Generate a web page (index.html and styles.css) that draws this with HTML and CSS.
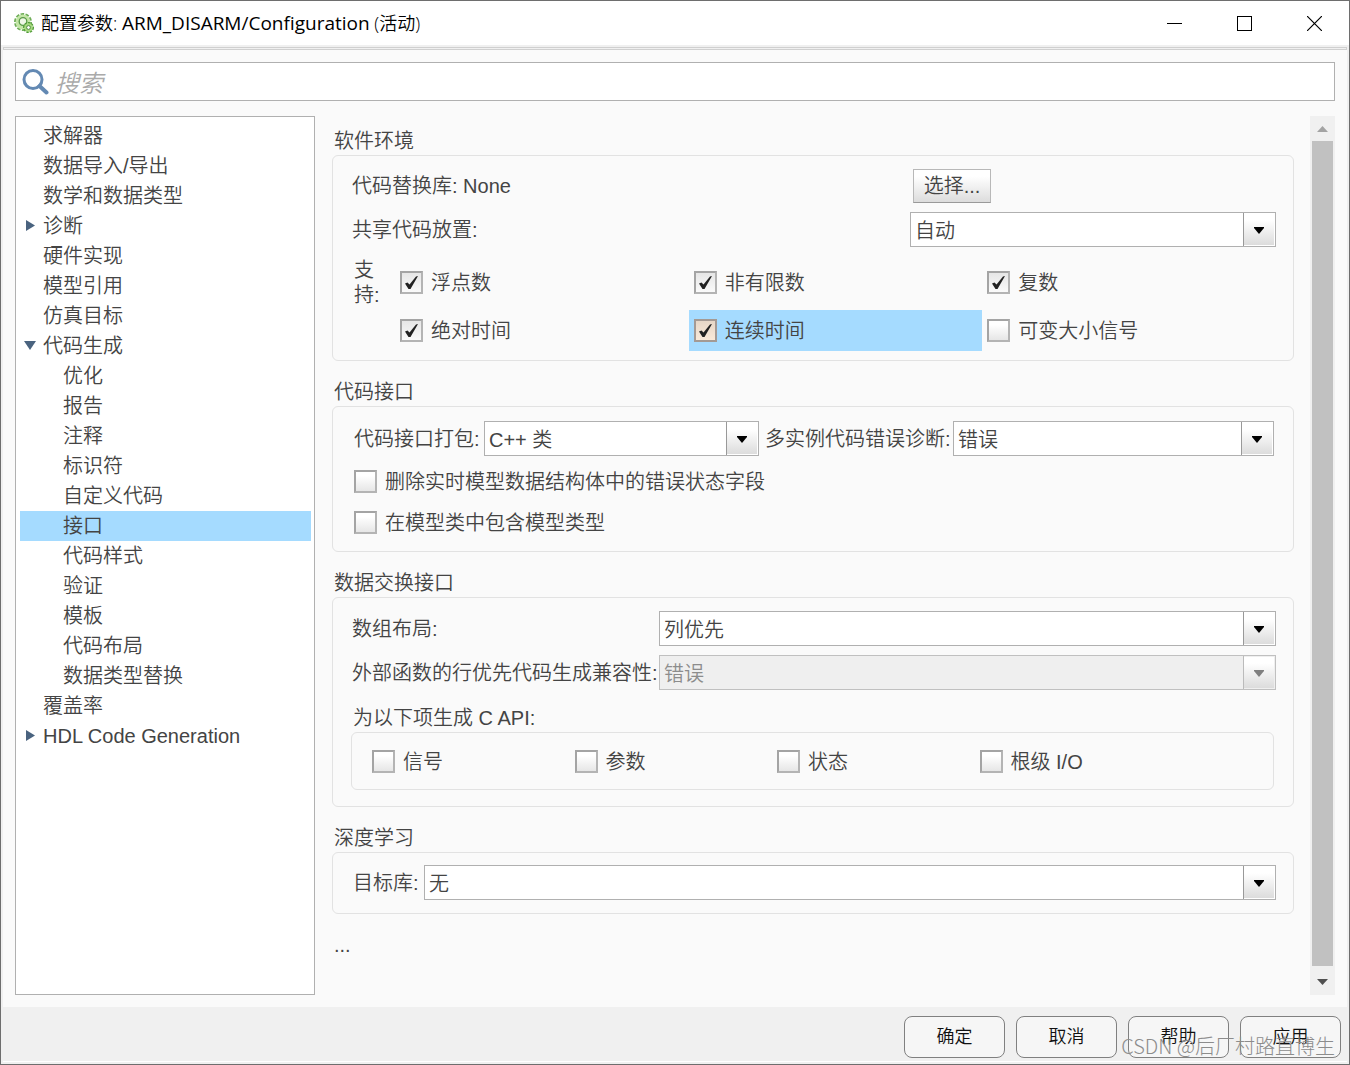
FILE: index.html
```html
<!DOCTYPE html>
<html lang="zh-CN">
<head>
<meta charset="utf-8">
<title>配置参数: ARM_DISARM/Configuration (活动)</title>
<link rel="stylesheet" href="styles.css">
</head>
<body>
<div class="window">
  <header class="titlebar">
    <svg class="app-icon" viewBox="0 0 20 20" aria-hidden="true">
      <circle cx="9" cy="9" r="8" fill="none" stroke="#6fae58" stroke-width="2" stroke-dasharray="3.600 1.400"/>
      <circle cx="9" cy="9" r="7.400" fill="#c3e6a6"/>
      <circle cx="9" cy="8.500" r="3.800" fill="#eef7e6" stroke="#5a9a48" stroke-width="1.300"/>
      <circle cx="14.500" cy="14.500" r="4.600" fill="none" stroke="#4f9a38" stroke-width="1.800" stroke-dasharray="2.400 1"/>
      <circle cx="14.500" cy="14.500" r="4.200" fill="#a5d97c"/>
      <circle cx="14.500" cy="14.500" r="1.900" fill="#fff" stroke="#4f8a40"/>
    </svg>
    <h1 class="title">配置参数: <span class="model">ARM_DISARM/Configuration</span> (活动)</h1>
    <div class="window-controls">
      <button type="button" class="window-button" aria-label="最小化"><svg width="15" height="15" viewBox="0 0 15 15"><path d="M0 7.500H15" stroke="#000"/></svg></button>
      <button type="button" class="window-button" aria-label="最大化"><svg width="15" height="15" viewBox="0 0 15 15"><rect x=".5" y=".5" width="14" height="14" fill="none" stroke="#000"/></svg></button>
      <button type="button" class="window-button" aria-label="关闭"><svg width="15" height="15" viewBox="0 0 15 15"><path d="M0 0L15 15M15 0L0 15" stroke="#000" stroke-width="1.200"/></svg></button>
    </div>
  </header>

  <div class="rule"></div>

  <main class="content">
    <label class="search">
      <svg width="27" height="27" viewBox="0 0 27 27" aria-hidden="true"><circle cx="11" cy="11.500" r="9" fill="none" stroke="#6389b3" stroke-width="3"/><path d="M17.500 18L24.500 24.500" stroke="#6389b3" stroke-width="4" stroke-linecap="round"/></svg>
      <input type="search" class="search-input" placeholder="搜索" aria-label="搜索">
    </label>

    <div class="columns">
      <nav class="tree" aria-label="类别">
        <ul class="tree-list">
          <li><a class="node" href="#">求解器</a></li>
          <li><a class="node" href="#">数据导入/导出</a></li>
          <li><a class="node" href="#">数学和数据类型</a></li>
          <li><a class="node branch" href="#"><svg width="14" height="14" viewBox="0 0 14 14"><path d="M2 1V12L11 6.500Z" fill="#4a637f"/></svg>诊断</a></li>
          <li><a class="node" href="#">硬件实现</a></li>
          <li><a class="node" href="#">模型引用</a></li>
          <li><a class="node" href="#">仿真目标</a></li>
          <li><a class="node branch" href="#"><svg width="14" height="14" viewBox="0 0 14 14"><path d="M0 2H12L6 11Z" fill="#4a637f"/></svg>代码生成</a>
            <ul class="tree-list nested">
              <li><a class="node" href="#">优化</a></li>
              <li><a class="node" href="#">报告</a></li>
              <li><a class="node" href="#">注释</a></li>
              <li><a class="node" href="#">标识符</a></li>
              <li><a class="node" href="#">自定义代码</a></li>
              <li><a class="node selected" href="#" aria-current="page">接口</a></li>
              <li><a class="node" href="#">代码样式</a></li>
              <li><a class="node" href="#">验证</a></li>
              <li><a class="node" href="#">模板</a></li>
              <li><a class="node" href="#">代码布局</a></li>
              <li><a class="node" href="#">数据类型替换</a></li>
            </ul>
          </li>
          <li><a class="node" href="#">覆盖率</a></li>
          <li><a class="node branch" href="#"><svg width="14" height="14" viewBox="0 0 14 14"><path d="M2 1V12L11 6.500Z" fill="#4a637f"/></svg>HDL Code Generation</a></li>
        </ul>
      </nav>

      <form class="settings">
        <section>
          <h2 class="group-title">软件环境</h2>
          <div class="group environment">
            <div class="split">
              <span>代码替换库: None</span>
              <button type="button" class="choose">选择...</button>
            </div>
            <div class="split">
              <label for="placement">共享代码放置:</label>
              <select id="placement" class="select"><option>自动</option></select>
            </div>
            <div class="support" role="group" aria-labelledby="support-label">
              <span id="support-label" class="support-label">支持:</span>
              <div class="support-grid">
                <label class="check"><input type="checkbox" checked>浮点数</label>
                <label class="check"><input type="checkbox" checked>非有限数</label>
                <label class="check"><input type="checkbox" checked>复数</label>
                <label class="check"><input type="checkbox" checked>绝对时间</label>
                <label class="check highlight"><input type="checkbox" checked>连续时间</label>
                <label class="check"><input type="checkbox">可变大小信号</label>
              </div>
            </div>
          </div>
        </section>

        <section>
          <h2 class="group-title">代码接口</h2>
          <div class="group code-interface">
            <div class="packaging">
              <label for="packaging">代码接口打包:</label>
              <select id="packaging" class="select"><option>C++ 类</option></select>
              <label for="multi">多实例代码错误诊断:</label>
              <select id="multi" class="select"><option>错误</option></select>
            </div>
            <label class="check"><input type="checkbox">删除实时模型数据结构体中的错误状态字段</label>
            <label class="check"><input type="checkbox">在模型类中包含模型类型</label>
          </div>
        </section>

        <section>
          <h2 class="group-title">数据交换接口</h2>
          <div class="group exchange">
            <div class="field">
              <label for="layout">数组布局:</label>
              <select id="layout" class="select"><option>列优先</option></select>
            </div>
            <div class="field">
              <label for="compat">外部函数的行优先代码生成兼容性:</label>
              <select id="compat" class="select" disabled><option>错误</option></select>
            </div>
            <div class="api" role="group" aria-labelledby="api-title">
              <h3 id="api-title" class="group-title">为以下项生成 C API:</h3>
              <div class="group api-group">
                <label class="check"><input type="checkbox">信号</label>
                <label class="check"><input type="checkbox">参数</label>
                <label class="check"><input type="checkbox">状态</label>
                <label class="check"><input type="checkbox">根级 I/O</label>
              </div>
            </div>
          </div>
        </section>

        <section>
          <h2 class="group-title">深度学习</h2>
          <div class="group learning">
            <label for="library">目标库:</label>
            <select id="library" class="select"><option>无</option></select>
          </div>
        </section>

        <a class="more" href="#">...</a>
      </form>

      <div class="scrollbar" aria-hidden="true">
        <svg width="25" height="25" viewBox="0 0 25 25"><path d="M7 16H18L12.500 10Z" fill="#a3a3a3"/></svg>
        <div class="thumb"></div>
        <svg width="25" height="29" viewBox="0 0 25 29"><path d="M7 13H18L12.500 19Z" fill="#505050"/></svg>
      </div>
    </div>
  </main>

  <footer class="footer">
    <button type="button" class="action">确定</button>
    <button type="button" class="action">取消</button>
    <button type="button" class="action">帮助</button>
    <button type="button" class="action">应用</button>
    <span class="watermark">CSDN @后厂村路直博生</span>
  </footer>
</div>
</body>
</html>
```

FILE: styles.css
```css
* {
  box-sizing: border-box;
}

body {
  margin: 0;
  color: #444;
  font: 350 20px/32px "Liberation Sans", "Noto Sans CJK SC", sans-serif;
}

h1, h2, h3, ul {
  margin: 0;
  padding: 0;
  font: inherit;
}

button, input, select {
  margin: 0;
  color: inherit;
  font: inherit;
}

.window {
  display: flex;
  flex-direction: column;
  min-height: 100vh;
  border: 1px solid #6e6e6e;
  background: #f0f0f0;
}

/* Title bar */
.titlebar {
  display: flex;
  align-items: center;
  height: 44px;
  padding-left: 13px;
  background: #fff;
}

.app-icon {
  width: 20px;
  height: 20px;
  margin-right: 7px;
}

.title {
  flex: 1;
  color: #000;
  font: 350 18px/30px "Open Sans", "Noto Sans CJK SC", sans-serif;
}

.model {
  font-size: 19px;
  font-weight: 400;
}

.window-controls {
  display: flex;
}

.window-button {
  display: flex;
  align-items: center;
  justify-content: center;
  width: 70px;
  height: 43px;
  padding: 0;
  border: 0;
  background: none;
}

.rule {
  height: 3px;
  margin: 2px 2px 0;
  border: 1px solid #d0d0d0;
}

/* Main area */
.content {
  flex: 1;
  display: flex;
  flex-direction: column;
  gap: 15px;
  margin: 0 2px;
  padding: 12px;
  background: #fafafa;
}

.search {
  display: flex;
  align-items: center;
  gap: 6px;
  height: 39px;
  padding-left: 6px;
  border: 1px solid #b0b0b0;
  background: #fff;
}

.search-input {
  flex: 1;
  height: 37px;
  padding: 4px 0 0;
  border: 0;
  outline: 0;
  background: none;
  font-size: 24px;
}

.search-input::placeholder {
  color: #aaa;
  font-style: italic;
}

.columns {
  flex: 1;
  display: flex;
}

.tree {
  width: 300px;
  padding: 4px 3px 4px 4px;
  border: 1px solid #b0b0b0;
  background: #fff;
}

.tree-list {
  list-style: none;
}

.node {
  display: flex;
  align-items: center;
  height: 30px;
  padding-left: 23px;
  color: inherit;
  text-decoration: none;
}

.branch {
  padding-left: 4px;
}

.branch svg {
  margin-right: 5px;
}

.nested .node {
  padding-left: 43px;
}

.selected {
  background: #a5dbff;
}

/* Settings form */
.settings {
  flex: 1;
  padding: 9px 16px 0 17px;
}

.group-title {
  height: 30px;
  padding-left: 2px;
}

.group {
  margin-bottom: 15px;
  border: 1px solid #e2e2e2;
  border-radius: 6px;
}

.environment {
  padding: 13px 17px 9px 19px;
}

.split {
  display: grid;
  grid-template-columns: 558fr 366fr;
  align-items: center;
  margin-bottom: 9px;
}

.choose {
  justify-self: start;
  width: 78px;
  height: 34px;
  margin-left: 3px;
  padding: 0;
  border: 1px solid #b8b8b8;
  border-bottom-color: #999;
  background: linear-gradient(#fff 20%, #dcdcdc);
}

.select {
  min-width: 0;
  width: 100%;
  height: 35px;
  padding: 2px 36px 0 4px;
  border: 1px solid #b0b0b0;
  border-radius: 0;
  appearance: none;
  background:
    url("data:image/svg+xml,%3Csvg xmlns='http://www.w3.org/2000/svg' width='10' height='7'%3E%3Cpath d='M0 0H10V1L5 7L0 1Z'/%3E%3C/svg%3E") right 11px top 14px / 10px 7px no-repeat,
    linear-gradient(#fff 20%, #dcdcdc) right 1px top 1px / 30px 31px no-repeat,
    linear-gradient(#999, #999) right 31px top 0 / 1px 33px no-repeat,
    #fff;
}

.select:disabled {
  border-color: #c0c0c0;
  color: #8c8c8c;
  opacity: 1;
  background:
    url("data:image/svg+xml,%3Csvg xmlns='http://www.w3.org/2000/svg' width='10' height='7'%3E%3Cpath fill='%23808080' d='M0 0H10V1L5 7L0 1Z'/%3E%3C/svg%3E") right 11px top 14px / 10px 7px no-repeat,
    linear-gradient(#fff 20%, #dcdcdc) right 1px top 1px / 30px 31px no-repeat,
    linear-gradient(#bbb, #bbb) right 31px top 0 / 1px 33px no-repeat,
    #efefef;
}

.check {
  display: flex;
  align-items: center;
  gap: 8px;
  height: 41px;
}

.check input {
  flex: none;
  width: 23px;
  height: 23px;
  border: 2px solid #b4b4b4;
  border-top-color: #a4a4a4;
  border-left-color: #a4a4a4;
  appearance: none;
  background: linear-gradient(#fff 20%, #e6e6e6);
}

.check input:checked {
  background:
    url("data:image/svg+xml,%3Csvg xmlns='http://www.w3.org/2000/svg' width='19' height='19'%3E%3Cpath d='M3 10.500L5.500 9.500L7.500 11.500L14 3.500L16 3L8.500 16L6.500 16Z' fill='%23222'/%3E%3C/svg%3E") center / 19px 19px no-repeat,
    linear-gradient(#e6e6e6, #fafafa);
}

.support {
  display: flex;
  margin-top: 11px;
}

.support-label {
  width: 43px;
  padding: 0 14px 0 2px;
  line-height: 25px;
}

.support-grid {
  flex: 1;
  display: grid;
  grid-template-columns: repeat(3, 1fr);
  row-gap: 7px;
  padding-top: 4px;
}

.support-grid .check {
  padding-left: 5px;
}

.highlight {
  background: #a5dbff;
}

.check.highlight input {
  border-color: #a49a94;
  background-color: #ffeedd;
  background-blend-mode: normal, multiply;
}

.code-interface {
  padding: 14px 19px 8px 21px;
}

.packaging {
  display: grid;
  grid-template-columns: 130px 275fr 194px 321fr;
  align-items: center;
  margin-bottom: 5px;
}

.packaging .select + label {
  padding-left: 6px;
}

.exchange {
  padding: 13px 17px 16px 18px;
}

.field {
  display: grid;
  grid-template-columns: 308px 1fr;
  align-items: center;
  margin-bottom: 9px;
  white-space: nowrap;
}

.field label {
  padding-left: 1px;
}

.api {
  margin: 12px 2px 0 0;
}

.api-group {
  display: grid;
  grid-template-columns: repeat(4, 1fr);
  margin: 0;
  padding: 8px 91px 7px 20px;
}

.learning {
  display: grid;
  grid-template-columns: 71px 1fr;
  align-items: center;
  padding: 12px 17px 13px 20px;
}

.more {
  display: inline-block;
  padding-left: 2px;
  color: inherit;
  text-decoration: none;
}

/* Scroll bar */
.scrollbar {
  display: flex;
  flex-direction: column;
  width: 25px;
  background: #f0f0f0;
}

.thumb {
  flex: 1;
  margin: 0 2px;
  background: #c1c1c1;
}

/* Footer */
.footer {
  position: relative;
  display: flex;
  justify-content: flex-end;
  gap: 11px;
  margin: 0 2px 2px;
  padding: 9px 6px 3px;
  border-bottom: 1px solid #fff;
}

.action {
  width: 101px;
  height: 42px;
  padding: 0;
  border: 1px solid #808080;
  border-radius: 8px;
  background: #f6f6f6;
  color: #111;
  font-size: 18px;
}

.watermark {
  position: absolute;
  right: 12px;
  bottom: 0;
  color: #8c8c8c;
  font-family: "Noto Sans CJK SC", sans-serif;
  font-weight: 300;
  line-height: 30px;
  white-space: nowrap;
}
```
